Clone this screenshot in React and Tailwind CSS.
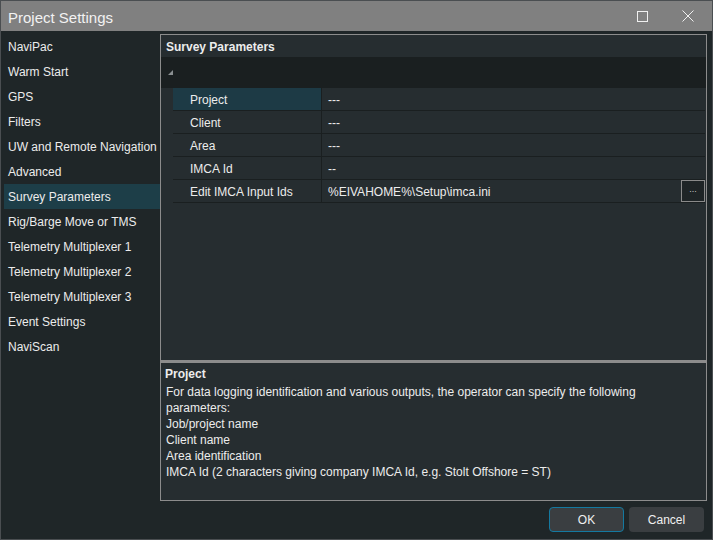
import React from "react";

const navItems = [
  "NaviPac",
  "Warm Start",
  "GPS",
  "Filters",
  "UW and Remote Navigation",
  "Advanced",
  "Survey Parameters",
  "Rig/Barge Move or TMS",
  "Telemetry Multiplexer 1",
  "Telemetry Multiplexer 2",
  "Telemetry Multiplexer 3",
  "Event Settings",
  "NaviScan",
];

const rows = [
  ["Project", "---"],
  ["Client", "---"],
  ["Area", "---"],
  ["IMCA Id", "--"],
  ["Edit IMCA Input Ids", "%EIVAHOME%\\Setup\\imca.ini"],
];

export default function App() {
  return (
    <div
      className="w-[713px] h-[540px] flex flex-col bg-[#1f2628] border border-[#4a4e51] text-[#ececec] overflow-hidden"
      style={{ fontFamily: '"Liberation Sans", Arial, sans-serif' }}
    >
      {/* Title bar */}
      <div className="h-[30px] shrink-0 bg-[#808080] flex items-center pl-[7px]">
        <div className="flex-1 text-[15px] text-[#f2f2f2] leading-none pt-[2px]">Project Settings</div>
        <div className="w-[46px] h-full flex items-center justify-center">
          <div className="w-[11px] h-[11px] border border-[#f0f0f0]" />
        </div>
        <div className="w-[46px] h-full flex items-center justify-center mr-[1px]">
          <svg width="12" height="12" viewBox="0 0 12 12">
            <path d="M0.5 0.5 L11.5 11.5 M11.5 0.5 L0.5 11.5" stroke="#f0f0f0" strokeWidth="1" />
          </svg>
        </div>
      </div>

      {/* Body */}
      <div className="flex flex-1 min-h-0">
        {/* Nav */}
        <div className="w-[159px] shrink-0 pt-[3px] pl-[3px]">
          {navItems.map((n) => (
            <div
              key={n}
              className={
                "h-[25px] flex items-center pl-[4px] pt-[1px] text-[12px] whitespace-nowrap " +
                (n === "Survey Parameters" ? "bg-[#1d3e48]" : "")
              }
            >
              {n}
            </div>
          ))}
        </div>

        {/* Right panel */}
        <div className="flex-1 mt-[3px] mr-[5px] border border-[#8c8c8c] bg-[#262d30] flex flex-col">
          <div className="h-[22px] shrink-0 flex items-center pl-[5px] pt-[1px] text-[12px] font-bold">Survey Parameters</div>
          <div className="h-[31px] shrink-0 bg-[#1a1f20] flex items-center pl-[7px]">
            <svg width="5" height="5" viewBox="0 0 5 5">
              <path d="M5 0 L5 5 L0 5 Z" fill="#8a8f91" />
            </svg>
          </div>
          <div className="flex-1 pl-[12px] pr-[1px]">
            {rows.map(([k, v], i) => (
              <div key={k} className="h-[23px] flex border-b border-[#1a1f20]">
                <div
                  className={
                    "w-[149px] shrink-0 flex items-center pl-[17px] pt-[1px] text-[12px] border-r border-[#1a1f20] " +
                    (i === 0 ? "bg-[#1d3a45]" : "")
                  }
                >
                  {k}
                </div>
                <div className="flex-1 flex items-center pl-[6px] text-[12px]">
                  <span className="flex-1 pt-[1px]">{v}</span>
                  {i === 4 && (
                    <div className="w-[24px] h-[22px] border border-[#8a8a8a] bg-[#1e2426] flex items-center justify-center text-[9px] leading-none text-[#c8c8c8] pb-[3px]">
                      ...
                    </div>
                  )}
                </div>
              </div>
            ))}
          </div>
          <div className="h-[3px] shrink-0 bg-[#8c8c8c]" />
          <div className="h-[137px] shrink-0 pl-[4px] pt-[3px] text-[12px] leading-[16px]">
            <div className="font-bold">Project</div>
            <div className="pl-[1px] pt-[2px]">
              <div>For data logging identification and various outputs, the operator can specify the following</div>
              <div>parameters:</div>
              <div>Job/project name</div>
              <div>Client name</div>
              <div>Area identification</div>
              <div>IMCA Id (2 characters giving company IMCA Id, e.g. Stolt Offshore = ST)</div>
            </div>
          </div>
        </div>
      </div>

      {/* Footer */}
      <div className="h-[38px] shrink-0 flex items-start justify-end gap-[5px] pt-[6px] pr-[8px]">
        <button className="w-[75px] h-[25px] rounded-[4px] bg-[#3a3e41] border border-[#1479a0] text-[12px] text-[#f0f0f0] pt-[1px]">OK</button>
        <button className="w-[75px] h-[25px] rounded-[4px] bg-[#3a3e41] text-[12px] text-[#f0f0f0] pt-[1px]">Cancel</button>
      </div>
    </div>
  );
}
